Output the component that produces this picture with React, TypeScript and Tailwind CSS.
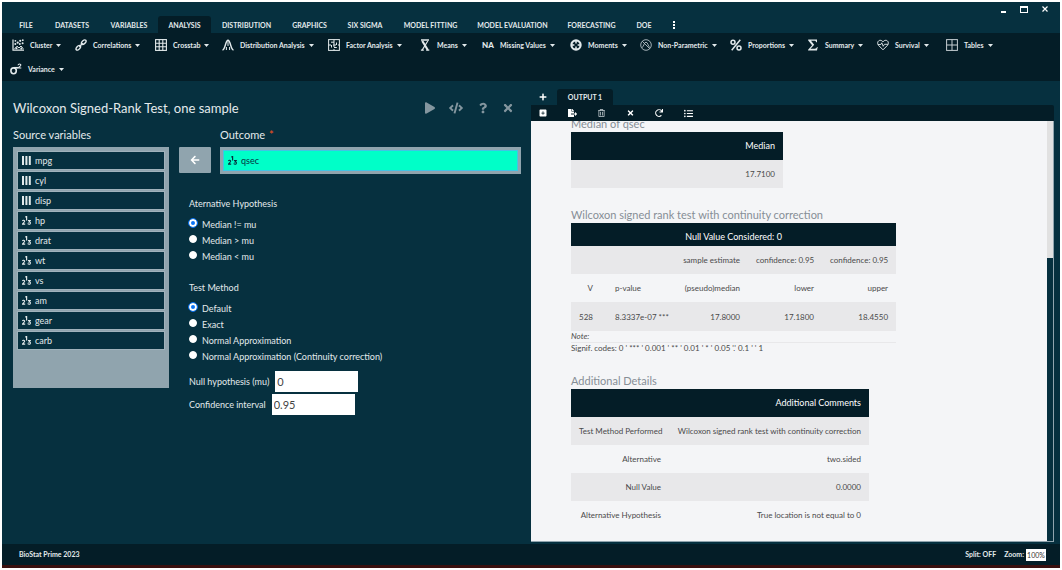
import React, { useState } from "react";
import {
  FaArrowLeft,
  FaCode,
  FaFileExport,
  FaListUl,
  FaPlay,
  FaPlus,
  FaQuestion,
  FaRedo,
  FaRegTrashAlt,
  FaTimes,
} from "react-icons/fa";
import { FaSquarePlus } from "react-icons/fa6";

const MENU = [
  { label: "FILE", width: "w-9" },
  { label: "DATASETS", width: "w-14" },
  { label: "VARIABLES", width: "w-[58px]" },
  { label: "ANALYSIS", width: "w-[53px]" },
  { label: "DISTRIBUTION", width: "w-[71px]" },
  { label: "GRAPHICS", width: "w-[55px]" },
  { label: "SIX SIGMA", width: "w-14" },
  { label: "MODEL FITTING", width: "w-[75px]" },
  { label: "MODEL EVALUATION", width: "w-[89px]" },
  { label: "FORECASTING", width: "w-[69px]" },
  { label: "DOE", width: "w-9" },
];

const stroke = {
  fill: "none",
  stroke: "currentColor",
  strokeWidth: 1,
} as const;

const RibbonIcon: React.FC<{ name: string }> = ({ name }) => {
  switch (name) {
    case "Cluster":
      return (
        <svg viewBox="0 0 12 12" className="h-3 w-3" {...stroke}>
          <path d="M1 0.5V11.2H12" strokeWidth="1.2" />
          <path d="M2.5 10L5 7.2L7 9L9 7L11.3 9.8" />
          <g fill="currentColor" stroke="none">
            <circle cx="3.4" cy="1.8" r="0.9" />
            <circle cx="3.3" cy="5" r="1" />
            <circle cx="5.7" cy="3.7" r="1.1" />
            <circle cx="7.8" cy="5" r="1" />
            <circle cx="8.2" cy="1.8" r="1.1" />
            <circle cx="10.8" cy="1.2" r="0.9" />
            <circle cx="10.6" cy="4.2" r="1" />
            <circle cx="4.5" cy="9.3" r="1" />
            <circle cx="9.3" cy="9.4" r="1" />
          </g>
        </svg>
      );
    case "Correlations":
      return (
        <svg viewBox="0 0 12 12" className="h-3 w-3" {...stroke} strokeWidth="1.4">
          <ellipse cx="8.7" cy="3.2" rx="2.8" ry="1.6" transform="rotate(-42 8.7 3.2)" />
          <ellipse cx="3.3" cy="8.8" rx="2.8" ry="1.6" transform="rotate(-48 3.3 8.8)" />
          <path d="M4.2 7.8L7.8 4.2" />
        </svg>
      );
    case "Crosstab":
      return (
        <svg viewBox="0 0 12 12" className="h-3 w-3" {...stroke} strokeWidth="1.1">
          <rect x="0.6" y="0.6" width="10.8" height="10.8" />
          <path d="M4.2 0.6V11.4M7.8 0.6V11.4M0.6 4.2H11.4M0.6 7.8H11.4" />
        </svg>
      );
    case "Distribution Analysis":
      return (
        <svg viewBox="0 0 12 12" className="h-3 w-3" {...stroke} strokeWidth="1.4">
          <path d="M0.5 11C3.5 10.5 3.4 1.2 6 1.2S8.5 10.5 11.5 11" />
          <path d="M4.4 11V8M7.6 11V8M6 1.2V7" strokeWidth="1" />
        </svg>
      );
    case "Factor Analysis":
      return (
        <svg viewBox="0 0 12 12" className="h-3 w-3" {...stroke}>
          <rect x="0.6" y="0.6" width="10.8" height="10.8" />
          <path d="M6 0.6V3.2M6 5.2V8M6 10V11.4M0.6 6H3M5 6H8M10 6H11.4" />
          <path d="M3 3.2H6V5M8.5 3.5V6M3.5 6V8.5M6 8.5H8.8" />
        </svg>
      );
    case "Means":
      return (
        <svg viewBox="0 0 12 12" className="h-3 w-3" {...stroke}>
          <path d="M2 1H10" strokeWidth="1.5" />
          <path d="M3.3 2L8.8 11" strokeWidth="2.1" />
          <path d="M8.8 2L3.2 11" strokeWidth="1.2" />
          <path d="M1.9 11.2H4.8M7.2 11.2H10.3" strokeWidth="1.2" />
        </svg>
      );
    case "Missing Values":
      return <span className="w-3 text-center text-[8px] font-black">NA</span>;
    case "Moments":
      return (
        <svg viewBox="0 0 12 12" className="h-3 w-3" {...stroke}>
          <circle cx="6" cy="6" r="4.6" strokeWidth="2.2" />
          <path d="M6 1V4.4M6 7.6V11M1 6H4.4M7.6 6H11" strokeWidth="1.5" />
        </svg>
      );
    case "Non-Parametric":
      return (
        <svg viewBox="0 0 12 12" className="h-3 w-3 text-[#b4c0c5]" {...stroke} strokeWidth="0.9">
          <circle cx="6" cy="6" r="5.3" />
          <path d="M2.2 2.2L9.8 9.8M2 8.5C4 8 3.8 3.2 6 3.2S8 8 10 8.5" />
        </svg>
      );
    case "Proportions":
      return (
        <svg viewBox="0 0 12 12" className="h-3 w-3" {...stroke} strokeWidth="1.5">
          <circle cx="3" cy="3.2" r="2" />
          <circle cx="9" cy="9" r="2" />
          <path d="M10.3 0.8L1.7 11.2" />
        </svg>
      );
    case "Summary":
      return (
        <svg viewBox="0 0 12 12" className="h-3 w-3" fill="currentColor">
          <path d="M1.2 0.5H10V3.2H9.2C8.8 2 8.3 1.8 7.4 1.8H4L7.2 5.7L3.5 9.8H7.8C9 9.8 9.5 9.4 10 8.1H10.7L10 11.5H1.1V10.7L5.1 6.2L1.2 1.4Z" />
        </svg>
      );
    case "Survival":
      return (
        <svg viewBox="0 0 12 12" className="h-3 w-3" {...stroke}>
          <path d="M6 10.8L1.5 6.3C-0.2 4.3 0.9 1.3 3.2 1.3C4.6 1.3 5.4 2 6 2.9C6.6 2 7.4 1.3 8.8 1.3C11.1 1.3 12.2 4.3 10.5 6.3Z" />
          <path d="M1 5.5H3.8L4.8 3.8L6.2 7.3L7.4 5.3H11" strokeWidth="0.9" />
        </svg>
      );
    case "Tables":
      return (
        <svg viewBox="0 0 12 12" className="h-3 w-3 text-[#c5ced2]" {...stroke}>
          <rect x="0.6" y="0.6" width="10.8" height="10.8" />
          <path d="M6 0.6V11.4M0.6 6H11.4" />
        </svg>
      );
    default:
      return (
        <svg viewBox="0 0 12 12" className="h-3 w-3" {...stroke}>
          <ellipse cx="3.6" cy="7.8" rx="2.7" ry="2.9" strokeWidth="1.6" />
          <path d="M3.6 4.7H8" strokeWidth="1.5" />
          <path d="M8 2.2C8.2 0.6 11 0.6 10.8 2.2C10.7 3.2 9 3.8 8.2 5H11.3" strokeWidth="1.1" />
        </svg>
      );
  }
};

const RIBBON = [
  { label: "Cluster", width: "w-[63px]" },
  { label: "Correlations", width: "w-20" },
  { label: "Crosstab", width: "w-[67px]" },
  { label: "Distribution Analysis", width: "w-[106px]" },
  { label: "Factor Analysis", width: "w-[91px]" },
  { label: "Means", width: "w-[63px]" },
  { label: "Missing Values", width: "w-[88px]" },
  { label: "Moments", width: "w-[70px]" },
  { label: "Non-Parametric", width: "w-[90px]" },
  { label: "Proportions", width: "w-[77px]" },
  { label: "Summary", width: "w-[70px]" },
  { label: "Survival", width: "w-[69px]" },
  { label: "Tables", width: "w-[60px]" },
];

const RibbonButton: React.FC<{ label: string; width: string }> = ({ label, width }) => (
  <button type="button" className={`flex h-6 shrink-0 items-center whitespace-nowrap text-left ${width}`}>
    <RibbonIcon name={label} />
    <span className="ml-1.5">{label}</span>
    <svg viewBox="0 0 5 3" className="ml-1 h-[3px] w-[5px]" fill="currentColor">
      <path d="M0 0H5L2.5 3Z" />
    </svg>
  </button>
);

const VARIABLES = [
  { name: "mpg", kind: "factor" },
  { name: "cyl", kind: "factor" },
  { name: "disp", kind: "factor" },
  { name: "hp", kind: "scale" },
  { name: "drat", kind: "scale" },
  { name: "wt", kind: "scale" },
  { name: "vs", kind: "scale" },
  { name: "am", kind: "scale" },
  { name: "gear", kind: "scale" },
  { name: "carb", kind: "scale" },
];

const VariableIcon: React.FC<{ kind: string }> = ({ kind }) =>
  kind === "factor" ? (
    <svg viewBox="0 0 9 9" className="h-[9px] w-[9px] shrink-0" fill="currentColor">
      <path d="M0 0H2V9H0ZM3.4 0H5.4V9H3.4ZM6.8 0H8.8V9H6.8Z" />
    </svg>
  ) : (
    <svg viewBox="0 0 9 9" className="h-[9px] w-[9px] shrink-0" fill="none" stroke="currentColor">
      <path d="M3.3 1.1L4.6 0.5V4.4" strokeWidth="1.2" />
      <path d="M0.4 5C0.8 3.8 2.8 4 2.6 5.3C2.5 6.3 1 7 0.5 8.1H3.2" strokeWidth="1.1" />
      <path d="M6 4.5H8.2L7 5.9C8.9 5.8 8.8 8.2 7.2 8.2C6.5 8.2 6 8 5.7 7.5" strokeWidth="1.1" />
    </svg>
  );

interface RadioGroupProps {
  title: string;
  name: string;
  options: string[];
  value: string;
  onChange: (value: string) => void;
}

const RadioGroup: React.FC<RadioGroupProps> = ({ title, name, options, value, onChange }) => (
  <fieldset>
    <legend className="mb-[7px] text-[9px] leading-3">{title}</legend>
    {options.map((option) => (
      <label key={option} className="flex h-4 items-start text-[9px] leading-4">
        <input
          type="radio"
          name={name}
          checked={value === option}
          onChange={() => onChange(option)}
          className="mt-0.5 mr-[5px] h-2 w-2 appearance-none rounded-full border border-white bg-white checked:border-2 checked:border-white checked:bg-[#0b74f5] checked:outline-1 checked:outline-[#0b74f5]"
        />
        {option}
      </label>
    ))}
  </fieldset>
);

const TH = "px-2 text-[9px] font-normal text-white";
const TD = "px-2 text-right";

const App: React.FC = () => {
  const [hypothesis, setHypothesis] = useState("Median != mu");
  const [method, setMethod] = useState("Default");
  const [mu, setMu] = useState("0");
  const [confidence, setConfidence] = useState("0.95");
  const [zoom, setZoom] = useState("100%");

  return (
    <div className="h-screen min-w-0 overflow-hidden bg-white p-0.5 font-[Lato,'Open_Sans',sans-serif] text-[#e3eaec]">
      <div className="flex h-full flex-col bg-[#06303f]">
        {/* Window controls */}
        <div className="flex h-3.5 items-center justify-end gap-3.5 pr-3">
          <button type="button" aria-label="Minimize" className="mt-1.5 h-0.5 w-[5px] bg-white" />
          <button type="button" aria-label="Maximize" className="h-[7px] w-2 border border-t-2 border-white" />
          <button type="button" aria-label="Close" className="w-1.5 text-white">
            <svg viewBox="0 0 6 6" className="h-1.5 w-1.5" stroke="currentColor" strokeWidth="1.2">
              <path d="M0.5 0.5L5.5 5.5M5.5 0.5L0.5 5.5" />
            </svg>
          </button>
        </div>

        {/* Menu tabs */}
        <nav className="flex h-[17px] shrink-0 pl-1.5 text-[7px] font-bold">
          {MENU.map(({ label, width }) => (
            <button
              key={label}
              type="button"
              className={`shrink-0 whitespace-nowrap pt-px text-center ${width} ${
                label === "ANALYSIS" ? "rounded-t-[3px] bg-[#041d27]" : ""
              }`}
            >
              {label}
            </button>
          ))}
          <button type="button" aria-label="More" className="flex w-6 flex-col items-center justify-center gap-px">
            <span className="h-0.5 w-0.5 bg-white" />
            <span className="h-0.5 w-0.5 bg-white" />
            <span className="h-0.5 w-0.5 bg-white" />
          </button>
        </nav>

        {/* Ribbon */}
        <div className="shrink-0 bg-[#041d27] text-[7px] font-bold">
          <div className="flex pl-2.5">
            {RIBBON.map((item) => (
              <RibbonButton key={item.label} {...item} />
            ))}
          </div>
          <div className="flex pl-2">
            <RibbonButton label="Variance" width="w-[60px]" />
          </div>
        </div>

        <main className="grid min-h-0 flex-1 grid-cols-2">
          {/* Dialog */}
          <section className="pt-[18px] pr-2.5 pl-[11px]">
            <div className="flex items-center">
              <h1 className="flex-1 text-[13px] leading-[18px]">Wilcoxon Signed-Rank Test, one sample</h1>
              <div className="flex items-center gap-3.5 pr-2 text-[#84969f]">
                <button type="button" aria-label="Run">
                  <FaPlay className="h-3 w-2.5" />
                </button>
                <button type="button" aria-label="Code">
                  <FaCode className="h-3 w-3.5" />
                </button>
                <button type="button" aria-label="Help" className="px-0.5">
                  <FaQuestion className="h-3 w-2" />
                </button>
                <button type="button" aria-label="Close dialog">
                  <FaTimes className="h-3 w-2.5" />
                </button>
              </div>
            </div>

            <div className="mt-2.5 flex gap-2.5">
              <div className="w-[156px] shrink-0">
                <h2 className="text-[11px] leading-4">Source variables</h2>
                <ul className="mt-1 flex min-h-[241px] flex-col gap-px bg-[#90a4ae] p-1">
                  {VARIABLES.map(({ name, kind }) => (
                    <li
                      key={name}
                      className="flex h-[19px] items-center gap-1 border border-[#9fb2bb] bg-[#06303f] px-1 text-[9px]"
                    >
                      <VariableIcon kind={kind} />
                      {name}
                    </li>
                  ))}
                </ul>
              </div>

              <div className="min-w-0 flex-1">
                <h2 className="flex gap-1 pl-[41px] text-[11px] leading-4">
                  Outcome <span className="text-[#f4511e]">*</span>
                </h2>
                <div className="mt-1 flex items-start gap-[9px]">
                  <button
                    type="button"
                    aria-label="Move variable"
                    className="flex h-[26px] w-8 shrink-0 items-center justify-center rounded-[1px] bg-[#90a4ae] text-white"
                  >
                    <FaArrowLeft className="h-2.5 w-2.5" />
                  </button>
                  <div className="min-w-0 flex-1 bg-[#90a4ae] p-[3px]">
                    <div className="flex h-[21px] items-center gap-1 border border-[#41c4e4] bg-[#00ffc8] px-1 text-[9px] text-[#06303f]">
                      <VariableIcon kind="scale" />
                      qsec
                    </div>
                  </div>
                </div>

                <div className="mt-6 pl-2.5">
                  <RadioGroup
                    title="Aternative Hypothesis"
                    name="hypothesis"
                    options={["Median != mu", "Median > mu", "Median < mu"]}
                    value={hypothesis}
                    onChange={setHypothesis}
                  />
                  <div className="mt-[17px]">
                    <RadioGroup
                      title="Test Method"
                      name="method"
                      options={[
                        "Default",
                        "Exact",
                        "Normal Approximation",
                        "Normal Approximation (Continuity correction)",
                      ]}
                      value={method}
                      onChange={setMethod}
                    />
                  </div>
                  <div className="mt-1.5 flex flex-col gap-0.5 text-[9px]">
                    <div className="flex items-center gap-1.5">
                      <label htmlFor="mu">Null hypothesis (mu)</label>
                      <input
                        id="mu"
                        value={mu}
                        onChange={(e) => setMu(e.target.value)}
                        className="h-[21px] w-[83px] bg-white px-0.5 text-[11px] text-[#444]"
                      />
                    </div>
                    <div className="flex items-center gap-1.5">
                      <label htmlFor="confidence">Confidence interval</label>
                      <input
                        id="confidence"
                        value={confidence}
                        onChange={(e) => setConfidence(e.target.value)}
                        className="h-[21px] w-[83px] bg-white px-0.5 text-[11px] text-[#444]"
                      />
                    </div>
                  </div>
                </div>
              </div>
            </div>
          </section>

          {/* Output */}
          <section className="flex min-h-0 flex-col pt-2 pr-1.5 pb-0.5">
            <div className="flex h-4 shrink-0">
              <button type="button" aria-label="New output" className="flex w-[26px] items-center justify-center pr-0.5 text-white">
                <FaPlus className="h-2 w-2" />
              </button>
              <button type="button" className="w-14 rounded-t-[3px] bg-[#041d27] text-[7px] font-bold">
                OUTPUT 1
              </button>
            </div>
            <div className="flex h-4 shrink-0 items-center gap-5 rounded-tr-[2px] bg-[#041d27] pl-2 text-white">
              <button type="button" aria-label="Add" className="w-[9px]">
                <FaSquarePlus className="h-2 w-2" />
              </button>
              <button type="button" aria-label="Export" className="w-[9px]">
                <FaFileExport className="h-2 w-[9px]" />
              </button>
              <button type="button" aria-label="Delete" className="w-[9px]">
                <FaRegTrashAlt className="h-2 w-[9px] text-[#c5ced2]" />
              </button>
              <button type="button" aria-label="Clear" className="w-[9px]">
                <FaTimes className="h-2 w-[9px]" />
              </button>
              <button type="button" aria-label="Refresh" className="w-[9px]">
                <FaRedo className="h-2 w-2" />
              </button>
              <button type="button" aria-label="List" className="w-[9px]">
                <FaListUl className="h-[9px] w-[9px]" />
              </button>
            </div>

            <div className="flex min-h-0 flex-1 border-r border-b border-[#90a4ae] bg-[#f4f5f7]">
              <div className="min-w-0 flex-1 overflow-hidden pl-10 text-[8px] text-[#4a4a4a]">
                <h3 className="-mt-1.5 text-[11px] leading-[17px] text-[#868e96]">Median of qsec</h3>
                <table className="w-[212px]">
                  <thead className="bg-[#041d27]">
                    <tr className="h-7">
                      <th className={`${TH} text-right`}>Median</th>
                    </tr>
                  </thead>
                  <tbody>
                    <tr className="h-7 bg-[#e8e8ea]">
                      <td className={TD}>17.7100</td>
                    </tr>
                  </tbody>
                </table>

                <h3 className="mt-[18px] text-[11px] leading-[17px] text-[#868e96]">
                  Wilcoxon signed rank test with continuity correction
                </h3>
                <table className="w-[325px] table-fixed">
                  <colgroup>
                    <col className="w-[30px]" />
                    <col className="w-[70px]" />
                    <col className="w-[77px]" />
                    <col className="w-[74px]" />
                    <col className="w-[74px]" />
                  </colgroup>
                  <thead className="bg-[#041d27]">
                    <tr className="h-[23px]">
                      <th colSpan={5} className={`${TH} pt-1 text-center`}>
                        Null Value Considered: 0
                      </th>
                    </tr>
                  </thead>
                  <tbody>
                    <tr className="h-7 whitespace-nowrap bg-[#e8e8ea]">
                      <td />
                      <td />
                      <td className={TD}>sample estimate</td>
                      <td className={TD}>confidence: 0.95</td>
                      <td className={TD}>confidence: 0.95</td>
                    </tr>
                    <tr className="h-7">
                      <td className={TD}>V</td>
                      <td className="pl-3.5">p-value</td>
                      <td className={TD}>(pseudo)median</td>
                      <td className={TD}>lower</td>
                      <td className={TD}>upper</td>
                    </tr>
                    <tr className="h-[29px] bg-[#e8e8ea]">
                      <td className={TD}>528</td>
                      <td className="pl-3.5 whitespace-nowrap">8.3337e-07 ***</td>
                      <td className={TD}>17.8000</td>
                      <td className={TD}>17.1800</td>
                      <td className={TD}>18.4550</td>
                    </tr>
                  </tbody>
                </table>
                <div className="w-[325px] leading-[11px]">
                  <p className="border-b border-[#e8e8ea] italic">Note:</p>
                  <p>{"Signif. codes: 0 ' *** ' 0.001 ' ** ' 0.01 ' * ' 0.05 '.' 0.1 ' ' 1"}</p>
                </div>

                <h3 className="mt-[18px] text-[11px] leading-[17px] text-[#868e96]">Additional Details</h3>
                <table className="w-[298px] table-fixed">
                  <colgroup>
                    <col className="w-[98px]" />
                    <col className="w-[200px]" />
                  </colgroup>
                  <thead className="bg-[#041d27]">
                    <tr className="h-7">
                      <td />
                      <th className={`${TH} text-right`}>Additional Comments</th>
                    </tr>
                  </thead>
                  <tbody>
                    {[
                      ["Test Method Performed", "Wilcoxon signed rank test with continuity correction"],
                      ["Alternative", "two.sided"],
                      ["Null Value", "0.0000"],
                      ["Alternative Hypothesis", "True location is not equal to 0"],
                    ].map(([label, value]) => (
                      <tr key={label} className="h-7 whitespace-nowrap odd:bg-[#e8e8ea]">
                        <td className={TD}>{label}</td>
                        <td className={TD}>{value}</td>
                      </tr>
                    ))}
                  </tbody>
                </table>
              </div>
              {/* Scroll bar */}
              <div className="flex w-1.5 flex-col bg-[#e1e1e1] pt-[137px]">
                <div className="flex-1 bg-[#06303f]" />
              </div>
            </div>
          </section>
        </main>

        <footer className="flex h-[21px] shrink-0 items-center gap-2 bg-[#041d27] pr-3.5 pl-[17px] text-[7px] font-bold">
          <span className="flex-1">BioStat Prime 2023</span>
          <span>Split: OFF</span>
          <div className="flex items-center gap-0.5">
            <label htmlFor="zoom">Zoom:</label>
            <input
              id="zoom"
              value={zoom}
              onChange={(e) => setZoom(e.target.value)}
              className="h-3 w-5 bg-white text-center font-normal text-[#333]"
            />
          </div>
        </footer>
        <div className="h-[3px] shrink-0 bg-[#3a100f]" />
      </div>
    </div>
  );
};

export default App;
